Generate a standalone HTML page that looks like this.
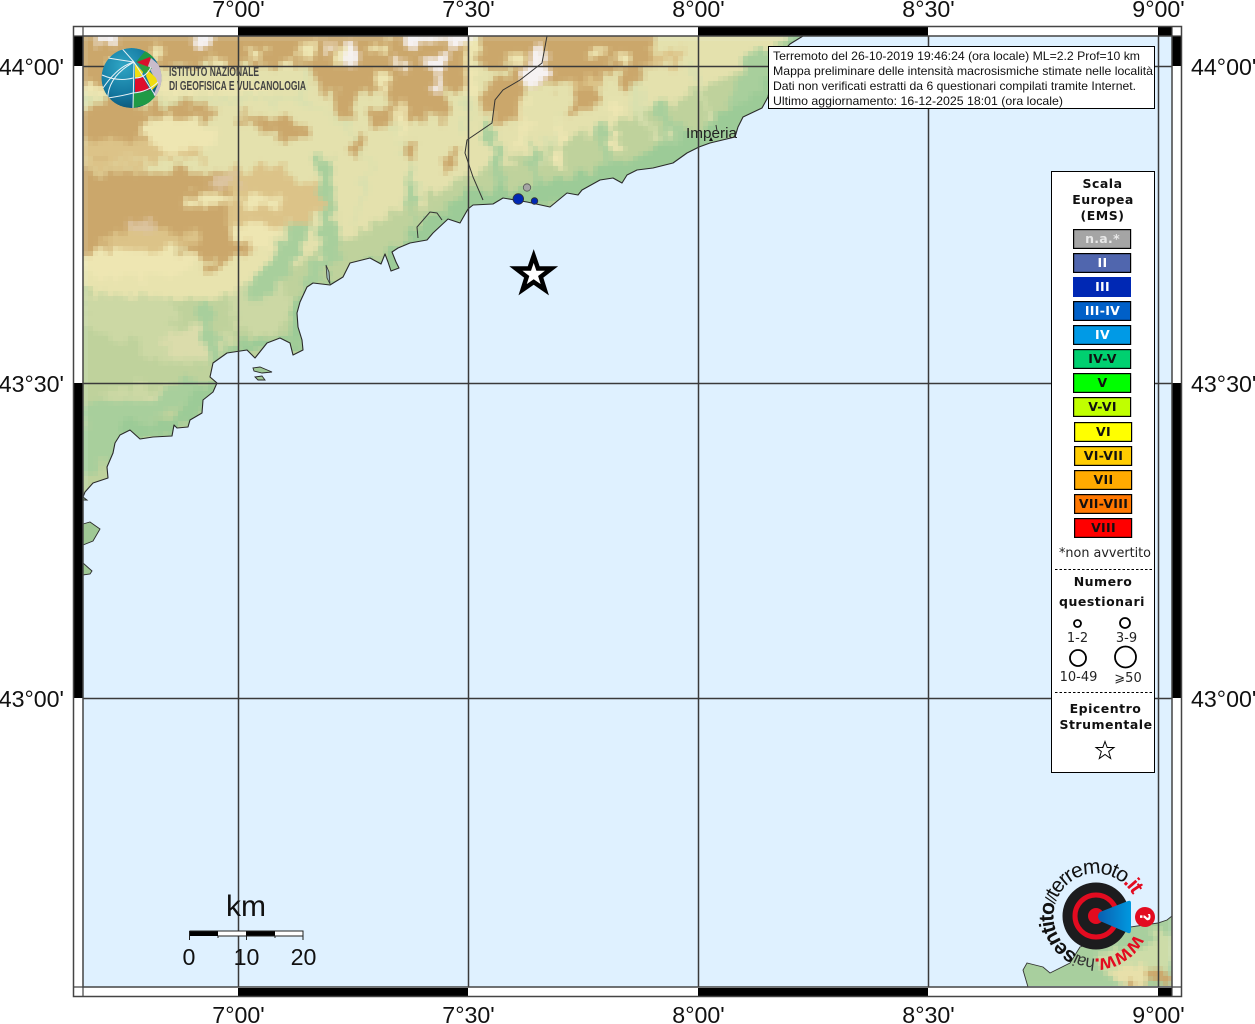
<!DOCTYPE html>
<html><head><meta charset="utf-8"><title>Mappa</title>
<style>html,body{margin:0;padding:0;background:#fff;overflow:hidden}svg{display:block}
.t{font-family:"Liberation Sans",sans-serif;font-size:23.2px;fill:#111}
.i{font-family:"Liberation Sans",sans-serif;font-size:12px;fill:#111}
.b{font-family:"DejaVu Sans",sans-serif;font-size:12px;font-weight:bold;text-anchor:middle;fill:#111}
.s{font-family:"DejaVu Sans",sans-serif;font-size:13px;text-anchor:middle;fill:#222}
</style></head><body>
<svg width="1255" height="1024" viewBox="0 0 1255 1024" xmlns="http://www.w3.org/2000/svg">
<defs>
<filter id="px" filterUnits="userSpaceOnUse" x="83" y="36" width="1090" height="952" primitiveUnits="userSpaceOnUse" color-interpolation-filters="sRGB">
<feTurbulence type="fractalNoise" baseFrequency=".075" numOctaves="2" seed="7" result="n"/>
<feDisplacementMap in="SourceGraphic" in2="n" scale="26" xChannelSelector="R" yChannelSelector="G"/>
<feGaussianBlur stdDeviation="2" result="blr"/>
<feFlood x="85" y="38" width="1" height="1" flood-color="#000"/>
<feComposite x="83" y="36" width="5" height="5"/>
<feTile result="a"/>
<feComposite in="blr" in2="a" operator="in"/>
<feMorphology operator="dilate" radius="2"/>
</filter>
<path id="coast" d="M803 36L790 44L775 60L768 97L762 108L743 117L738 127L735 137L710 143L699 147L687 153L673 163L653 168L637 170L627 175L622 183L613 178L600 180L582 190L578 195L567 193L550 207L527 202L503 198L493 204L473 205L468 209L460 223L448 219L433 233L427 240L410 243L398 248L392 252L396 262L399 268L391 271L388 262L385 254L381 264L370 258L350 263L343 277L330 285L313 283L307 287L300 302L297 313L298 327L302 340L303 350L293 355L290 343L280 338L267 343L255 358L247 350L227 353L213 363L210 377L217 383L213 392L203 400L202 413L190 420L188 427L177 428L174 425L172 436L153 437L140 439L130 430L120 435L115 443L113 453L107 467L108 478L93 483L85 492L83 497L83 36Z"/>
<clipPath id="land"><use href="#coast"/></clipPath>
<clipPath id="br"><path d="M1172 916L1167 920L1158 923L1130 927L1107 938L1080 947L1070 963L1050 973L1043 967L1027 963L1023 970L1028 987L1172 987Z"/></clipPath>
<clipPath id="gl"><circle cx="131.5" cy="78" r="30"/></clipPath>
<radialGradient id="gb" cx="35%" cy="30%" r="80%"><stop offset="0" stop-color="#2fa5c4"/><stop offset=".6" stop-color="#13779f"/><stop offset="1" stop-color="#0c4f6e"/></radialGradient>
<linearGradient id="cone" x1="0" y1="0" x2="1" y2="0"><stop offset="0" stop-color="#0a5fb0"/><stop offset="1" stop-color="#0099e0"/></linearGradient>
<path id="circ" d="M1134.5 934A42.5 42.5 0 1 1 1134 897"/>
</defs>
<rect width="1255" height="1024" fill="#fff"/>
<rect x="83" y="36" width="1089" height="951" fill="#dff1ff"/>

<!-- terrain -->
<g clip-path="url(#land)">
<g filter="url(#px)">
<rect x="60" y="20" width="780" height="520" fill="#e4e1ad"/>
<path d="M60 270L190 280L300 262L470 175L700 90L830 20L830 300L60 540Z" fill="#bfd29c"/>
<g fill="#ccd8a4"><ellipse cx="190" cy="345" rx="50" ry="20"/><ellipse cx="130" cy="310" rx="45" ry="30"/><ellipse cx="160" cy="395" rx="60" ry="9"/><ellipse cx="260" cy="300" rx="30" ry="35"/></g>
<g fill="#dbdcab"><ellipse cx="192" cy="342" rx="28" ry="14"/><ellipse cx="170" cy="397" rx="28" ry="6"/></g>
<path d="M60 265L300 250L300 262L210 300L60 290Z" fill="#e8e3ae"/>
<ellipse cx="135" cy="262" rx="60" ry="16" fill="#eee6b2"/>
<!-- green belts -->
<g fill="none" stroke="#a8cf9c" stroke-linecap="round">
<path d="M60 415L150 412L195 385" stroke-width="20"/>
<path d="M60 455L115 440" stroke-width="44"/>
<path d="M205 310L215 360" stroke-width="16"/>
<path d="M325 165L330 250L310 280" stroke-width="16"/>
<path d="M300 230L260 290" stroke-width="22"/>
<path d="M410 170L412 230" stroke-width="6"/><path d="M490 130L500 190" stroke-width="10"/><path d="M530 140L540 190" stroke-width="7"/><path d="M600 130L610 170" stroke-width="7"/>
<path d="M760 60L740 110" stroke-width="26"/>
<path d="M660 110L690 150" stroke-width="16"/>
</g>
<path d="M300 315L345 290L390 265L440 230L470 205L530 200L620 178L700 142L770 100L805 36" fill="none" stroke="#9ccb97" stroke-width="26"/>
<path d="M225 350L260 345L295 350L300 300L330 285" fill="none" stroke="#9ccb97" stroke-width="14"/>
<path d="M120 432L170 430L205 395L215 385" fill="none" stroke="#9ccb97" stroke-width="16"/>
<!-- pale valley lines -->
<g fill="none" stroke="#d9e0ae" stroke-width="5">
<path d="M240 100L300 100L345 125L370 160L355 220"/><path d="M60 95L170 100L300 98"/><path d="M395 125L420 190"/><path d="M470 60L465 130"/><path d="M560 110L540 170"/><path d="M640 60L640 120L670 140"/><path d="M690 60L710 120"/><path d="M310 60L300 100"/>
</g>
<!-- brown northern band -->
<g fill="#cba76b">
<rect x="60" y="20" width="410" height="46"/>
<rect x="60" y="66" width="80" height="25"/>
<ellipse cx="115" cy="122" rx="38" ry="24"/><ellipse cx="100" cy="150" rx="22" ry="10"/>
<ellipse cx="180" cy="111" rx="32" ry="8"/>
<ellipse cx="275" cy="125" rx="38" ry="9" transform="rotate(12 275 125)"/>
<rect x="315" y="66" width="150" height="26"/>
<ellipse cx="345" cy="95" rx="12" ry="22"/><ellipse cx="415" cy="95" rx="28" ry="27"/><ellipse cx="380" cy="118" rx="13" ry="12"/><ellipse cx="440" cy="105" rx="10" ry="15"/>
<ellipse cx="358" cy="145" rx="5" ry="13"/><ellipse cx="410" cy="150" rx="7" ry="12"/><ellipse cx="450" cy="160" rx="8" ry="9"/>
<rect x="480" y="20" width="175" height="48"/>
<ellipse cx="505" cy="100" rx="22" ry="24"/><ellipse cx="585" cy="100" rx="14" ry="14"/><ellipse cx="560" cy="75" rx="50" ry="12"/><ellipse cx="628" cy="78" rx="14" ry="12"/>
<rect x="60" y="172" width="213" height="50"/>
<path d="M60 220L285 220L260 245L216 268L195 260L170 240L140 245L110 250L60 260Z"/>
</g>
<g fill="#dcc388">
<rect x="60" y="140" width="143" height="18"/><rect x="60" y="160" width="83" height="10"/>
<rect x="230" y="170" width="60" height="60"/><ellipse cx="300" cy="200" rx="20" ry="22"/>
<ellipse cx="150" cy="240" rx="50" ry="10"/>
<rect x="570" y="80" width="40" height="8"/><rect x="650" y="50" width="30" height="15"/>
</g>
<!-- pale & mottling -->
<g fill="#eee6b2">
<ellipse cx="180" cy="135" rx="38" ry="16"/><rect x="60" y="84" width="213" height="9"/>
<rect x="185" y="195" width="45" height="10"/><rect x="240" y="195" width="40" height="15"/>
<ellipse cx="255" cy="235" rx="22" ry="12"/>
<rect x="150" y="45" width="10" height="12"/><rect x="250" y="48" width="12" height="12"/><rect x="300" y="44" width="14" height="12"/><rect x="335" y="50" width="10" height="14"/><rect x="375" y="40" width="14" height="14"/><rect x="375" y="76" width="12" height="18"/>
<rect x="110" y="60" width="14" height="8"/><rect x="212" y="56" width="14" height="10"/><rect x="282" y="58" width="12" height="8"/>
<rect x="510" y="54" width="12" height="12"/><rect x="590" y="44" width="12" height="12"/><rect x="620" y="54" width="10" height="10"/><rect x="465" y="44" width="12" height="50"/>
<rect x="398" y="100" width="7" height="40"/><rect x="520" y="95" width="8" height="50"/><rect x="555" y="120" width="8" height="50"/><rect x="610" y="100" width="8" height="50"/>
</g>
<g fill="#dcc4a0"><rect x="211" y="176" width="30" height="11"/><rect x="125" y="222" width="30" height="10"/></g>
<g fill="#f6f2f2">
<rect x="405" y="20" width="65" height="24"/><rect x="100" y="30" width="14" height="16"/><rect x="197" y="30" width="14" height="16"/><rect x="345" y="48" width="12" height="14"/><rect x="428" y="56" width="18" height="16"/><rect x="435" y="72" width="9" height="22"/><rect x="530" y="50" width="16" height="26"/><rect x="525" y="72" width="20" height="12"/>
</g>
<g fill="#f0e4cf"><rect x="325" y="40" width="12" height="10"/><rect x="400" y="60" width="10" height="8"/></g>
</g>
</g>
<!-- coast outline -->
<path d="M803 36L790 44L775 60L768 97L762 108L743 117L738 127L735 137L710 143L699 147L687 153L673 163L653 168L637 170L627 175L622 183L613 178L600 180L582 190L578 195L567 193L550 207L527 202L503 198L493 204L473 205L468 209L460 223L448 219L433 233L427 240L410 243L398 248L392 252L396 262L399 268L391 271L388 262L385 254L381 264L370 258L350 263L343 277L330 285L313 283L307 287L300 302L297 313L298 327L302 340L303 350L293 355L290 343L280 338L267 343L255 358L247 350L227 353L213 363L210 377L217 383L213 392L203 400L202 413L190 420L188 427L177 428L174 425L172 436L153 437L140 439L130 430L120 435L115 443L113 453L107 467L108 478L93 483L85 492L83 497" fill="none" stroke="#2a2a2a" stroke-width="1.1" stroke-linejoin="round"/>
<!-- islands -->
<g fill="#9fc895" stroke="#2a2a2a" stroke-width=".9">
<path d="M253 368L260 367L272 372L262 373L254 371Z"/>
<path d="M255 377L262 376L265 380L258 380Z"/>
<path d="M83 524L90 522L100 529L93 541L83 545Z"/>
<path d="M83 563L92 571L90 574L83 575Z"/>
<path d="M83 497L87 500L83 500Z"/>
</g>
<path d="M326 265L329 272L330 284L327 278Z" fill="#9db9b8" stroke="#333" stroke-width=".8"/>
<!-- bottom right land -->
<g clip-path="url(#br)">
<g filter="url(#px)">
<rect x="1010" y="900" width="175" height="100" fill="#a8cf9e"/>
<ellipse cx="1135" cy="962" rx="35" ry="14" fill="#cddca8"/><ellipse cx="1160" cy="948" rx="14" ry="22" fill="#cddca8"/>
<ellipse cx="1135" cy="975" rx="30" ry="8" fill="#e8e0aa"/>
<ellipse cx="1158" cy="975" rx="14" ry="7" fill="#cba76b"/><ellipse cx="1138" cy="985" rx="12" ry="3" fill="#cba76b"/>
</g>
</g>
<path d="M1172 916L1167 920L1158 923L1130 927L1107 938L1080 947L1070 963L1050 973L1043 967L1027 963L1023 970L1028 987" fill="none" stroke="#333" stroke-width=".9"/>
<!-- borders -->
<g fill="none" stroke="#333" stroke-width="1">
<path d="M547 36L542 63L520 80L503 90L495 100L492 123L467 140L465 153L473 177L483 200"/>
<path d="M418 238L417 227L430 212L437 213L442 220"/>
</g>

<!-- grid -->
<g stroke="#3a3a3a" stroke-width="1.5">
<path d="M238.5 36V987M468.5 36V987M698.5 36V987M928.5 36V987M1158.5 36V987"/>
<path d="M83 66.5H1172M83 383.5H1172M83 698.5H1172"/>
</g>

<!-- frame -->
<g fill="#000">
<rect x="238" y="26" width="230" height="10"/><rect x="698" y="26" width="230" height="10"/><rect x="1158" y="26" width="14" height="10"/>
<rect x="238" y="988" width="230" height="9"/><rect x="698" y="988" width="230" height="9"/><rect x="1158" y="988" width="14" height="9"/>
<rect x="73" y="36" width="10" height="30"/><rect x="73" y="383" width="10" height="315"/>
<rect x="1172" y="36" width="10" height="30"/><rect x="1172" y="383" width="10" height="315"/>
</g>
<rect x="73.5" y="26.5" width="1108" height="970" fill="none" stroke="#444" stroke-width="1.5"/>
<rect x="83" y="36" width="1089" height="951" fill="none" stroke="#444" stroke-width="1.5"/>
<path d="M73 36H83M1172 36H1182M73 987H83M1172 987H1182M83 26V36M83 987V997M1172 26V36M1172 987V997" stroke="#444" stroke-width="1.2"/>

<!-- axis labels -->
<g class="t" text-anchor="middle">
<text x="238.5" y="17">7°00'</text><text x="468.5" y="17">7°30'</text><text x="698.5" y="17">8°00'</text><text x="928.5" y="17">8°30'</text><text x="1158.5" y="17">9°00'</text>
<text x="238.5" y="1023">7°00'</text><text x="468.5" y="1023">7°30'</text><text x="698.5" y="1023">8°00'</text><text x="928.5" y="1023">8°30'</text><text x="1158.5" y="1023">9°00'</text>
</g>
<g class="t" text-anchor="end"><text x="64" y="75">44°00'</text><text x="64" y="392">43°30'</text><text x="64" y="707">43°00'</text></g>
<g class="t"><text x="1191" y="75">44°00'</text><text x="1191" y="392">43°30'</text><text x="1191" y="707">43°00'</text></g>

<!-- imperia -->
<text x="686" y="138" font-family="Liberation Sans,sans-serif" font-size="15" fill="#222" textLength="51" lengthAdjust="spacingAndGlyphs">Imperia</text>
<path d="M709 141L711 137L713 141Z" fill="#111"/><path d="M716 125L717 131" stroke="#333" fill="none"/>

<!-- events -->
<circle cx="527" cy="187.5" r="3.7" fill="#a5a5a5" stroke="#555" stroke-width=".8"/>
<circle cx="518.3" cy="199" r="5.3" fill="#0028b4" stroke="#333" stroke-width=".8"/>
<circle cx="534.5" cy="201" r="3.3" fill="#0028b4" stroke="#333" stroke-width=".8"/>
<path d="M533.7 256L538 268.5L551.5 268.5L540.7 276.8L544.8 289.7L533.7 282L522.6 289.7L526.7 276.8L515.9 268.5L529.4 268.5Z" fill="#fff" stroke="#000" stroke-width="4.5" stroke-miterlimit="8"/>

<!-- info box -->
<rect x="768.5" y="46.5" width="386" height="62" fill="#fff" stroke="#000" stroke-width="1"/>
<g class="i">
<text x="773" y="60" textLength="367" lengthAdjust="spacingAndGlyphs">Terremoto del 26-10-2019 19:46:24 (ora locale) ML=2.2 Prof=10 km</text>
<text x="773" y="75" textLength="380" lengthAdjust="spacingAndGlyphs">Mappa preliminare delle intensità macrosismiche stimate nelle località</text>
<text x="773" y="90" textLength="363" lengthAdjust="spacingAndGlyphs">Dati non verificati estratti da 6 questionari compilati tramite Internet.</text>
<text x="773" y="105" textLength="290" lengthAdjust="spacingAndGlyphs">Ultimo aggiornamento: 16-12-2025 18:01 (ora locale)</text>
</g>

<!-- legend -->
<rect x="1051.5" y="171.5" width="103" height="601" fill="#fff" stroke="#000" stroke-width="1"/>
<g class="b" style="font-size:12.5px;letter-spacing:.5px">
<text x="1102.5" y="188">Scala</text><text x="1103" y="204">Europea</text><text x="1102.5" y="220">(EMS)</text>
</g>
<g stroke="#000" stroke-width="1.2">
<rect x="1073.6" y="229.6" width="57" height="18.8" fill="#a5a5a5"/>
<rect x="1073.6" y="253.6" width="57" height="18.8" fill="#5066ae"/>
<rect x="1073" y="277" width="58" height="20" fill="#0028b4" stroke="none"/>
<rect x="1073.6" y="301.6" width="57" height="18.8" fill="#0060c8"/>
<rect x="1073.6" y="325.6" width="57" height="18.8" fill="#009ae6"/>
<rect x="1073.6" y="349.6" width="57" height="18.8" fill="#00d070"/>
<rect x="1073.6" y="373.6" width="57" height="18.8" fill="#00ff00"/>
<rect x="1073.6" y="397.6" width="57" height="18.8" fill="#c0ff00"/>
<rect x="1074.6" y="422.6" width="57" height="18.8" fill="#ffff00"/>
<rect x="1074.6" y="446.6" width="57" height="18.8" fill="#ffcc00"/>
<rect x="1074.6" y="470.6" width="57" height="18.8" fill="#ffaa00"/>
<rect x="1074.6" y="494.6" width="57" height="18.8" fill="#ff7700"/>
<rect x="1074.6" y="518.6" width="57" height="18.8" fill="#ff0000"/>
</g>
<g class="b" style="font-size:12.5px;letter-spacing:.3px">
<text x="1102.5" y="243" style="fill:#e8e8e8">n.a.*</text>
<text x="1102.5" y="267" style="fill:#fff">II</text>
<text x="1102.5" y="291" style="fill:#fff">III</text>
<text x="1102.5" y="315" style="fill:#fff">III-IV</text>
<text x="1102.5" y="339" style="fill:#fff">IV</text>
<text x="1102.5" y="363">IV-V</text>
<text x="1102.5" y="387">V</text>
<text x="1102.5" y="411">V-VI</text>
<text x="1103.5" y="436">VI</text>
<text x="1103.5" y="460">VI-VII</text>
<text x="1103.5" y="484">VII</text>
<text x="1103.5" y="508">VII-VIII</text>
<text x="1103.5" y="532">VIII</text>
</g>
<text class="s" x="1105" y="557" textLength="92" lengthAdjust="spacingAndGlyphs">*non avvertito</text>
<path d="M1055 569.5H1153M1055 692.5H1152" stroke="#000" stroke-dasharray="2.5 2" fill="none"/>
<g class="b" style="font-size:12.5px;letter-spacing:.5px">
<text x="1103" y="586">Numero</text><text x="1102" y="606">questionari</text>
<text x="1105.5" y="713">Epicentro</text><text x="1106" y="729">Strumentale</text>
</g>
<g fill="#fff" stroke="#000" stroke-width="1.8">
<circle cx="1077.5" cy="623.5" r="3.5"/><circle cx="1125" cy="623" r="5"/><circle cx="1078" cy="658" r="8"/><circle cx="1125.5" cy="657" r="10.5"/>
</g>
<g class="s">
<text x="1077.5" y="642">1-2</text><text x="1126.5" y="642">3-9</text><text x="1078.5" y="681">10-49</text><text x="1128" y="682">⩾50</text>
</g>
<path d="M1105 741.5L1107.2 747.5L1114 747.5L1108.7 751.5L1110.7 758.5L1105 754.5L1099.3 758.5L1101.3 751.5L1096 747.5L1102.8 747.5Z" fill="#fff" stroke="#000" stroke-width="1"/>

<!-- INGV logo -->
<g clip-path="url(#gl)">
<circle cx="131.5" cy="78" r="30" fill="url(#gb)"/>
<path d="M136 62L146 50L154 58L140 64Z" fill="#1e9a46"/>
<path d="M137 62L150 57L152 66L145 68Z" fill="#d9102c"/>
<path d="M151 58L165 70L161 98L153 96L158 84L148 66Z" fill="#c9bccb"/>
<path d="M135 63L143 72L142 76L135 78Z" fill="#f2dd10"/>
<path d="M138 63L146 66L152 68L146 74L143 72Z" fill="#2f9e3f"/>
<path d="M148 70L156 78L158 84L152 90L146 76Z" fill="#efdc10"/>
<path d="M135 79L143 77L150 90L135 92Z" fill="#de0d2c"/>
<path d="M133 93L151 90L155 97L148 104L133 108Z" fill="#1f9a46"/>
<g fill="none" stroke="#e8f2f6" stroke-width="1">
<path d="M134 62L133 108"/><path d="M134 62L118 44"/><path d="M134 62Q105 78 108 104"/><path d="M134 62Q118 66 103 88"/>
<path d="M134 62Q120 60 108 58Q108 50 114 48"/><path d="M102 75Q118 82 133 78"/><path d="M108 98Q122 96 133 93"/>
<path d="M134 62L155 95"/>
<path d="M133 93Q148 92 158 82"/><path d="M135 78Q146 78 151 67"/>
</g>
</g>
<g font-family="Liberation Sans,sans-serif" font-size="13" font-weight="bold" fill="#444">
<text x="169" y="76" textLength="90" lengthAdjust="spacingAndGlyphs">ISTITUTO NAZIONALE</text>
<text x="169" y="90" textLength="137" lengthAdjust="spacingAndGlyphs">DI GEOFISICA E VULCANOLOGIA</text>
</g>

<!-- scale -->
<text x="246" y="916" font-family="Liberation Sans,sans-serif" font-size="30" text-anchor="middle" fill="#111">km</text>
<g>
<rect x="189.5" y="931" width="113" height="5" fill="#fff"/>
<rect x="189.5" y="931" width="28.5" height="5" fill="#000"/><rect x="246" y="931" width="29" height="5" fill="#000"/>
<path d="M189.5 931H303V936M189.5 931V940M218 936V938M246.5 936V940M275 936V938M303 936V940M218 936H303" fill="none" stroke="#222" stroke-width="1"/>
</g>
<g class="t" text-anchor="middle"><text x="189" y="965">0</text><text x="246.5" y="965">10</text><text x="303.5" y="965">20</text></g>

<!-- haisentito logo -->
<circle cx="1096" cy="916" r="33.5" fill="#1c1c1e"/>
<circle cx="1096" cy="916" r="21" fill="none" stroke="#e30b20" stroke-width="5"/>
<circle cx="1096" cy="916" r="8" fill="#e30b20"/>
<path d="M1100 912L1128 901Q1131 900 1131 903V930Q1131 934 1128 933L1100 921Q1096 916 1100 912Z" fill="url(#cone)"/>
<circle cx="1145" cy="917" r="10" fill="#e30b20"/>
<text x="1145" y="922" font-family="DejaVu Sans,sans-serif" font-weight="bold" font-size="14" text-anchor="middle" fill="#fff" transform="rotate(90 1145 917)">?</text>
<text font-family="Liberation Sans,sans-serif" font-size="21" fill="#111"><textPath href="#circ" textLength="226" lengthAdjust="spacing"><tspan fill="#e30b20" font-weight="bold">www.</tspan><tspan fill="#333" font-size="17">hai</tspan><tspan font-weight="bold">sentito</tspan><tspan font-size="16">//</tspan><tspan>terremoto</tspan><tspan fill="#e30b20" font-weight="bold">.it</tspan></textPath></text>
</svg>
</body></html>
